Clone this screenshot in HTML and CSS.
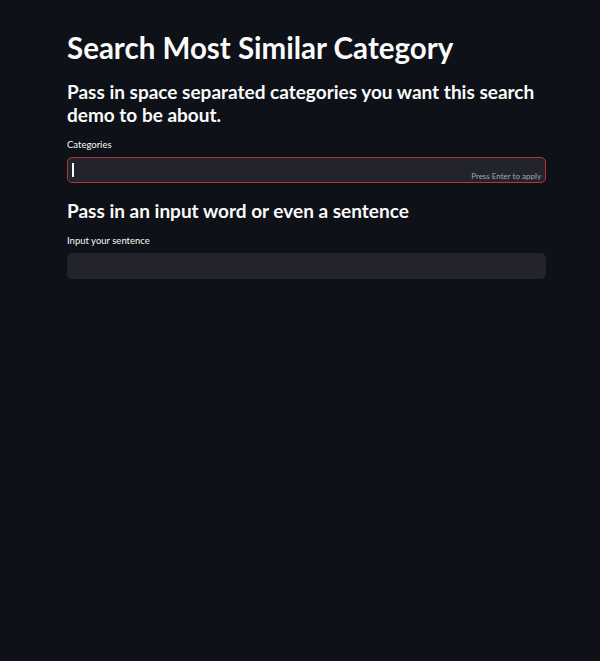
FILE: index.html
```html
<!DOCTYPE html>
<html>
<head>
<meta charset="utf-8">
<link rel="stylesheet" href="styles.css">
</head>
<body>
<main class="main">
  <h1 class="title">Search Most Similar Category</h1>
  <h3 class="subhead">Pass in space separated categories you want this search demo to be about.</h3>
  <div class="field">
    <label class="label">Categories</label>
    <div class="input input-focus">
      <span class="caret"></span>
      <span class="hint">Press Enter to apply</span>
    </div>
  </div>
  <h3 class="subhead sub2">Pass in an input word or even a sentence</h3>
  <div class="field">
    <label class="label">Input your sentence</label>
    <div class="input"></div>
  </div>
</main>
</body>
</html>
```

FILE: styles.css
```css
html, body {
  margin: 0;
  padding: 0;
  background: #0e1117;
  height: 100%;
}
body {
  font-family: Lato, "Noto Sans", sans-serif;
  color: #fafafa;
}
.main {
  width: 479px;
  margin: 0 0 0 67px;
  padding: 28px 0 0 0;
  display: flex;
  flex-direction: column;
}
.title {
  margin: 0;
  font-size: 29.5px;
  font-weight: 700;
  line-height: 40px;
}
.subhead {
  margin: 12px 0 0 0;
  font-size: 19px;
  font-weight: 700;
  line-height: 23px;
}
.sub2 {
  margin-top: 16px;
}
.field {
  margin-top: 12px;
  display: flex;
  flex-direction: column;
}
.label {
  font-size: 9.5px;
  line-height: 14px;
  margin-bottom: 5px;
}
.input {
  height: 26px;
  box-sizing: border-box;
  background: #22232b;
  border-radius: 5px;
  border: 1px solid #22232b;
  position: relative;
  display: flex;
  align-items: center;
  padding-left: 4px;
}
.input-focus {
  border-color: #b8323c;
}
.caret {
  width: 1.5px;
  height: 14px;
  background: #fafafa;
}
.hint {
  position: absolute;
  right: 4px;
  bottom: 1px;
  font-size: 8px;
  color: #a3a8b8;
}
```
